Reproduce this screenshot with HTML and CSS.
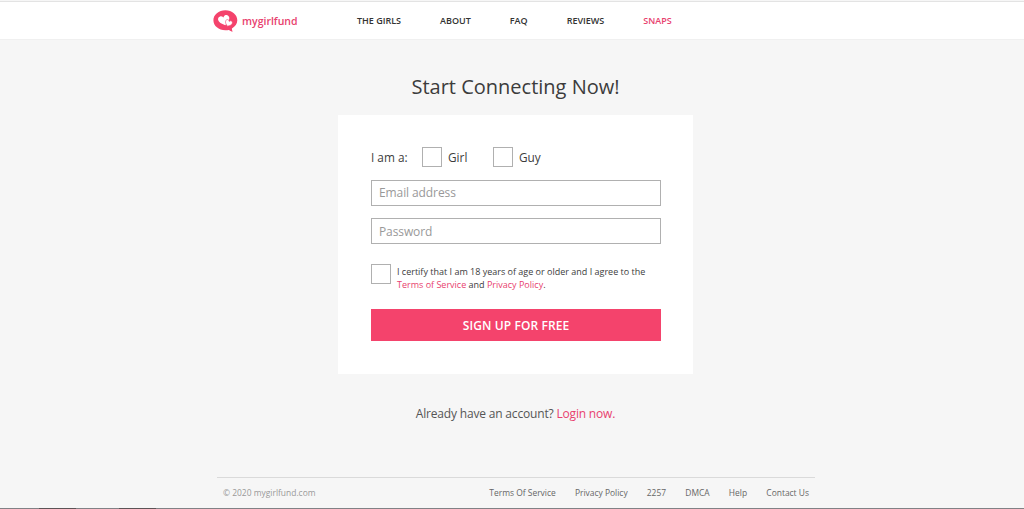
FILE: index.html
```html
<!DOCTYPE html>
<html lang="en">
  <head>
    <meta charset="UTF-8" />
    <meta name="viewport" content="width=device-width, initial-scale=1.0" />
    <title>mygirlfund</title>
    <link rel="stylesheet" href="styles.css">
  </head>
  <body>
    <header class="header">
      <a href="#" class="logo">
        <svg class="logo-icon" viewBox="0 0 25 22" width="25" height="22">
          <path fill="#f4436c" d="M12.4 0.3C5.7 0.3 0.4 4.700 0.4 10.3s5.300 10 12 10c1.300 0 2.400-.1 3.500-.4 1 .9 2.200 1.400 3.900 1.600-.7-.9-1-1.900-.9-3.100 3.300-1.800 5.400-4.700 5.400-8.100 0-5.600-5.300-10-11.900-10z"/>
          <path fill="#fff" transform="translate(11 10) rotate(-14)" d="M0 5.300C-3.600 3-5.700 1.200-5.700-1.300-5.700-3.200-4.500-4.400-2.900-4.400-1.600-4.400-.6-3.700 0-2.500.6-3.700 1.600-4.400 2.900-4.400 4.500-4.400 5.700-3.200 5.700-1.300 5.700 1.200 3.600 3 0 5.300z"/>
          <path fill="#fff" stroke="#f4436c" stroke-width="0.5" transform="translate(15.600 13) rotate(22)" d="M0 3.400C-2.400 1.800-3.500.7-3.500-.9-3.500-2.200-2.800-2.900-1.800-2.900-1-2.900-.4-2.500 0-1.700.4-2.500 1-2.900 1.800-2.900 2.800-2.900 3.500-2.200 3.500-.9 3.500.7 2.400 1.800 0 3.400z"/>
        </svg>
        <span class="logo-text">mygirlfund</span>
      </a>
      <nav class="nav">
        <a href="#">THE GIRLS</a>
        <a href="#">ABOUT</a>
        <a href="#">FAQ</a>
        <a href="#">REVIEWS</a>
        <a href="#" class="nav-snaps">SNAPS</a>
      </nav>
    </header>

    <main class="main">
      <h1>Start Connecting Now!</h1>
      <form class="card">
        <div class="gender">
          <span class="gender-label">I am a:</span>
          <label class="choice"><input type="checkbox" class="box" /><span>Girl</span></label>
          <label class="choice"><input type="checkbox" class="box" /><span>Guy</span></label>
        </div>
        <input type="text" class="field email" placeholder="Email address" />
        <input type="password" class="field" placeholder="Password" />
        <div class="certify">
          <input type="checkbox" class="box" />
          <p>
            I certify that I am 18 years of age or older and I agree to the<br />
            <a href="#">Terms of Service</a> and <a href="#">Privacy Policy</a>.
          </p>
        </div>
        <button type="button" class="signup">SIGN UP FOR FREE</button>
      </form>
      <p class="login">Already have an account? <a href="#">Login now.</a></p>
    </main>

    <footer class="footer">
      <span class="copyright">© 2020 mygirlfund.com</span>
      <nav class="footer-links">
        <a href="#">Terms Of Service</a>
        <a href="#">Privacy Policy</a>
        <a href="#">2257</a>
        <a href="#">DMCA</a>
        <a href="#">Help</a>
        <a href="#">Contact Us</a>
      </nav>
    </footer>
    <div class="bottom-line"></div>
  </body>
</html>
```
FILE: styles.css
```css
* {
  box-sizing: border-box;
}
body {
  display: flex;
  flex-direction: column;
  height: 509px;
  margin: 0;
  background-color: #f6f6f6;
  color: #3c3c3c;
  font-family: "Open Sans", "Noto Sans", sans-serif;
  overflow: hidden;
}
a {
  color: #e8416e;
  text-decoration: none;
}
.header {
  display: flex;
  align-items: center;
  height: 39px;
  margin-top: 1px;
  padding: 0 0 0 213px;
  border-top: 1px solid #e3e3e3;
  border-bottom: 1px solid #f0f0f0;
  background: #fff;
}
.logo {
  display: flex;
  align-items: center;
  width: 144px;
  gap: 4px;
}
.logo-icon {
  display: block;
}
.logo-text {
  font-size: 10.5px;
  font-weight: 600;
  line-height: 20px;
}
.nav {
  display: flex;
  gap: 39px;
}
.nav a {
  color: #333;
  font-size: 9px;
  font-weight: 600;
  line-height: 20px;
}
.nav .nav-snaps {
  color: #e8416e;
}
.main {
  display: flex;
  flex-direction: column;
  align-items: center;
  width: 355px;
  margin-left: 338px;
}
h1 {
  margin: 32px 0 13px;
  font-size: 20px;
  font-weight: 400;
  line-height: 30px;
}
.card {
  width: 355px;
  height: 259px;
  padding: 32px 32px 0 33px;
  background: #fff;
}
.gender {
  display: flex;
  align-items: center;
  height: 20px;
  font-size: 11.8px;
}
.gender-label {
  width: 51px;
}
.choice {
  display: flex;
  align-items: center;
  width: 71px;
  gap: 6px;
}
.box {
  flex: none;
  width: 20px;
  height: 20px;
  margin: 0;
  border: 1px solid #b0b0b0;
  background: #fff;
  appearance: none;
}
.field {
  display: block;
  width: 100%;
  height: 26px;
  margin-top: 13px;
  padding: 0 7px;
  border: 1px solid #b0b0b0;
  font-family: inherit;
  font-size: 12px;
  letter-spacing: -0.1px;
}
.email {
  padding-bottom: 2px;
}
.field::placeholder {
  color: #999;
}
.field + .field {
  margin-top: 12px;
}
.certify {
  display: flex;
  gap: 6px;
  height: 26px;
  margin-top: 20px;
}
.certify p {
  margin: 1px 0 0;
  font-size: 9px;
  line-height: 13px;
  white-space: nowrap;
}
.signup {
  display: block;
  width: 100%;
  height: 32px;
  margin-top: 19px;
  padding: 0;
  border: 0;
  background: #f4436c;
  color: #fff;
  font-family: inherit;
  font-size: 12px;
  font-weight: 600;
  letter-spacing: 0.1px;
}
.login {
  margin: 30px 0 0;
  color: #555;
  font-size: 12px;
  letter-spacing: -0.18px;
  line-height: 20px;
}
.footer {
  display: flex;
  justify-content: space-between;
  align-items: center;
  width: 598px;
  height: 31px;
  margin: auto 0 0 217px;
  padding: 0 6px 1px;
  border-top: 1px solid #dadada;
  font-size: 8.45px;
}
.copyright {
  color: #999;
}
.footer-links {
  display: flex;
  gap: 19.2px;
}
.footer-links a {
  color: #666;
}
.bottom-line {
  height: 1px;
  background: linear-gradient(
    to right,
    #818185 39px,
    #5c5456 39px 76px,
    #818185 76px 119px,
    #5c5456 119px 156px,
    #818185 156px
  );
}
```
